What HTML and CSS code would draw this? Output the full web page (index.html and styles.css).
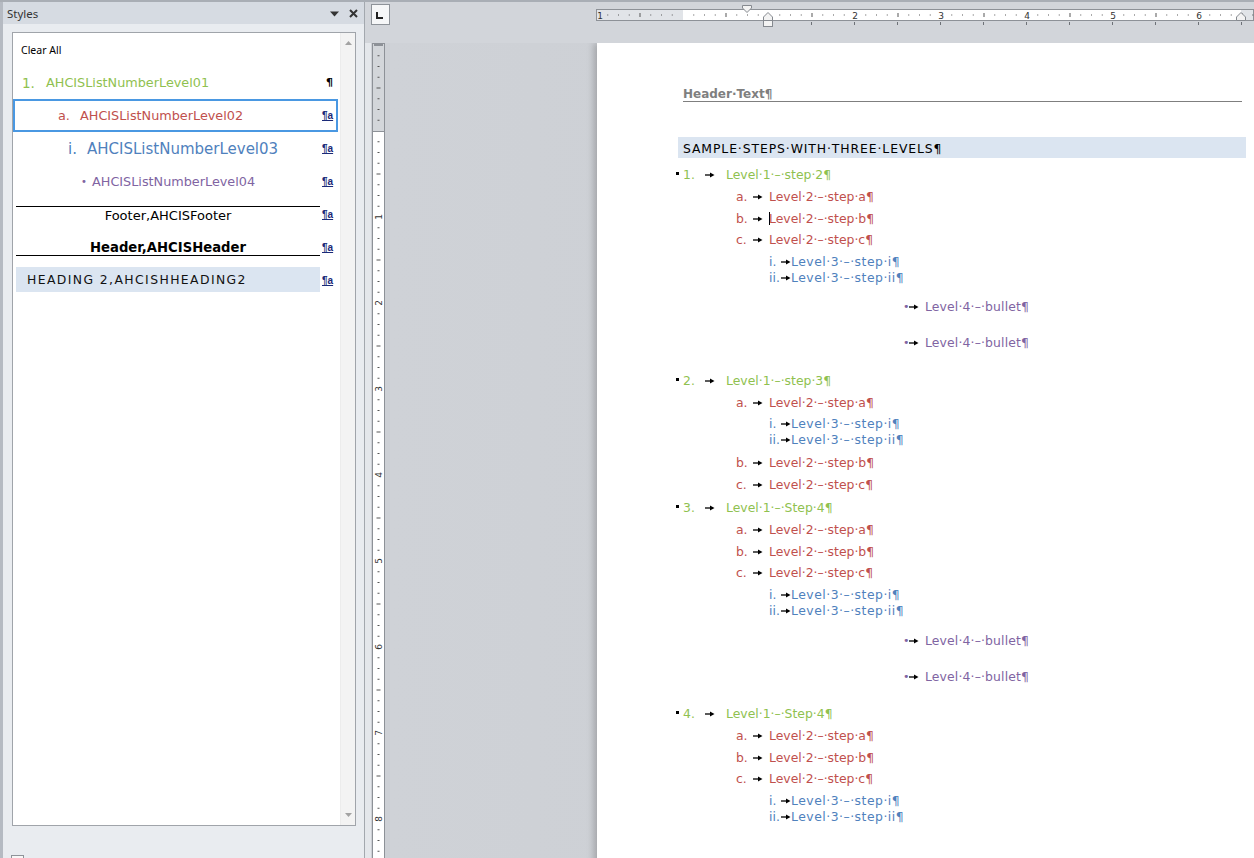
FILE: index.html
```html
<!DOCTYPE html>
<html>
<head>
<meta charset="utf-8">
<title>Styles</title>
<link rel="stylesheet" href="styles.css">
</head>
<body>
<div class="app">
  <aside class="pane">
    <div class="pane-title">
      <span class="pane-name">Styles</span>
      <span class="pane-btns">
        <svg class="ico-drop" width="9" height="6" viewBox="0 0 9 6"><path d="M0 0.5H9L4.5 5.5Z" fill="#333"/></svg>
        <svg class="ico-close" width="9" height="9" viewBox="0 0 9 9"><path d="M1 1L8 8M8 1L1 8" stroke="#333" stroke-width="2"/></svg>
      </span>
    </div>
    <div class="listbox">
      <div class="rows">
        <div class="srow"><div class="prev clear">Clear All</div><div class="sic"></div></div>
        <div class="srow"><div class="prev p1"><span class="n1">1.</span><span>AHCISListNumberLevel01</span></div><div class="sic para">¶</div></div>
        <div class="srow sel"><div class="prev p2"><span class="n2">a.</span><span>AHCISListNumberLevel02</span></div><div class="sic link">¶a</div></div>
        <div class="srow"><div class="prev p3"><span class="n3">i.</span><span>AHCISListNumberLevel03</span></div><div class="sic link">¶a</div></div>
        <div class="srow"><div class="prev p4"><span class="n4">•</span><span>AHCISListNumberLevel04</span></div><div class="sic link">¶a</div></div>
        <div class="srow"><div class="prev pfoot">Footer,AHCISFooter</div><div class="sic link">¶a</div></div>
        <div class="srow"><div class="prev phead">Header,AHCISHeader</div><div class="sic link">¶a</div></div>
        <div class="srow"><div class="prev ph2">HEADING 2,AHCISHHEADING2</div><div class="sic link">¶a</div></div>
      </div>
      <div class="vscroll">
        <svg width="7" height="4" viewBox="0 0 7 4"><path d="M0 4H7L3.5 0Z" fill="#a3a3a3"/></svg>
        <svg width="7" height="4" viewBox="0 0 7 4"><path d="M0 0H7L3.5 4Z" fill="#a3a3a3"/></svg>
      </div>
    </div>
    <div class="pane-foot"><span class="chk"></span></div>
  </aside>

  <section class="work">
    <div class="tabsel">
      <svg width="19" height="21" viewBox="0 0 19 21"><rect x="0.5" y="0.5" width="18" height="20" fill="#f6f7f8" stroke="#8e9399"/><path d="M6 8V14H12" fill="none" stroke="#222" stroke-width="2"/></svg>
    </div>
    <div class="hruler-cell">
      <svg class="hruler" width="658" height="24" viewBox="0 0 658 24">
        <defs>
          <pattern id="hticks" x="87" y="0" width="86" height="24" patternUnits="userSpaceOnUse">
            <rect x="10.25" y="10.5" width="1" height="1" fill="#555"/>
            <rect x="21" y="10.5" width="1" height="1" fill="#555"/>
            <rect x="31.75" y="10.5" width="1" height="1" fill="#555"/>
            <rect x="42.5" y="9" width="1" height="4" fill="#555"/>
            <rect x="53.25" y="10.5" width="1" height="1" fill="#555"/>
            <rect x="64" y="10.5" width="1" height="1" fill="#555"/>
            <rect x="74.75" y="10.5" width="1" height="1" fill="#555"/>
          </pattern>
          <pattern id="htabs" x="215" y="0" width="43" height="24" patternUnits="userSpaceOnUse">
            <rect x="0" y="18" width="1" height="3" fill="#6d7177"/>
          </pattern>
        </defs>
        <rect x="0.5" y="5.5" width="657" height="11" fill="#e1e4e8" stroke="#8d9197"/>
        <rect x="87" y="6" width="558" height="10" fill="#ffffff"/>
        <rect x="0" y="5" width="658" height="12" fill="url(#hticks)"/>
        <rect x="215" y="17" width="443" height="7" fill="url(#htabs)"/>
        <g class="rnum">
          <text x="4" y="14.5">1</text>
          <text x="259" y="14.5">2</text>
          <text x="345" y="14.5">3</text>
          <text x="431" y="14.5">4</text>
          <text x="517" y="14.5">5</text>
          <text x="603" y="14.5">6</text>
        </g>
        <path d="M146.5 1.5H155.5V4L151 8.5L146.5 4Z" fill="#f3f3f3" stroke="#85898f"/>
        <path d="M167.5 16.5V13L172 8.5L176.5 13V16.5Z" fill="#f3f3f3" stroke="#85898f"/>
        <rect x="167.5" y="16.5" width="9" height="6" fill="#f3f3f3" stroke="#85898f"/>
        <path d="M640.5 16.5V13L645 8.5L649.5 13V16.5Z" fill="#f3f3f3" stroke="#85898f"/>
      </svg>
    </div>
    <div class="vruler-cell">
      <svg class="vruler" width="13" height="815" viewBox="0 0 13 815">
        <defs>
          <pattern id="vticks" x="0" y="88" width="13" height="86" patternUnits="userSpaceOnUse">
            <rect x="5.5" y="10.25" width="2" height="1" fill="#555"/>
            <rect x="5.5" y="21" width="2" height="1" fill="#555"/>
            <rect x="5.5" y="31.75" width="2" height="1" fill="#555"/>
            <rect x="4.5" y="42.5" width="4" height="1" fill="#555"/>
            <rect x="5.5" y="53.25" width="2" height="1" fill="#555"/>
            <rect x="5.5" y="64" width="2" height="1" fill="#555"/>
            <rect x="5.5" y="74.75" width="2" height="1" fill="#555"/>
          </pattern>
        </defs>
        <rect x="0.5" y="0.5" width="12" height="830" fill="#ffffff" stroke="#8d9197"/>
        <rect x="1" y="1" width="11" height="87" fill="#d3d6da"/>
        <line x1="0" y1="88.5" x2="13" y2="88.5" stroke="#8d9197"/>
        <rect x="2" y="0" width="9" height="3" fill="#8d9197"/>
        <rect x="0" y="0" width="13" height="815" fill="url(#vticks)"/>
        <g class="rnum">
          <text transform="translate(6.5 174) rotate(-90)" y="3">1</text>
          <text transform="translate(6.5 260) rotate(-90)" y="3">2</text>
          <text transform="translate(6.5 346) rotate(-90)" y="3">3</text>
          <text transform="translate(6.5 432) rotate(-90)" y="3">4</text>
          <text transform="translate(6.5 518) rotate(-90)" y="3">5</text>
          <text transform="translate(6.5 604) rotate(-90)" y="3">6</text>
          <text transform="translate(6.5 690) rotate(-90)" y="3">7</text>
          <text transform="translate(6.5 776) rotate(-90)" y="3">8</text>
        </g>
      </svg>
    </div>
    <div class="docarea">
      <div class="page">
        <div class="hdr">Header·Text¶</div>
        <div class="h2band">SAMPLE·STEPS·WITH·THREE·LEVELS¶</div>
        <div class="list">
          <div class="ln l1"><i class="sq"></i><span class="num">1.</span><span class="tab"><svg class="arw" width="10" height="6" viewBox="0 0 10 6"><path d="M0 3H6" stroke="#000" stroke-width="1.3"/><path d="M5 0.5L9.5 3L5 5.5Z" fill="#000"/></svg></span><span class="txt">Level·1·–·step·2¶</span></div>
          <div class="ln l2"><span class="num">a.</span><span class="tab"><svg class="arw" width="10" height="6" viewBox="0 0 10 6"><path d="M0 3H6" stroke="#000" stroke-width="1.3"/><path d="M5 0.5L9.5 3L5 5.5Z" fill="#000"/></svg></span><span class="txt">Level·2·–·step·a¶</span></div>
          <div class="ln l2"><span class="num">b.</span><span class="tab"><svg class="arw" width="10" height="6" viewBox="0 0 10 6"><path d="M0 3H6" stroke="#000" stroke-width="1.3"/><path d="M5 0.5L9.5 3L5 5.5Z" fill="#000"/></svg></span><span class="txt"><span class="caret"></span>Level·2·–·step·b¶</span></div>
          <div class="ln l2"><span class="num">c.</span><span class="tab"><svg class="arw" width="10" height="6" viewBox="0 0 10 6"><path d="M0 3H6" stroke="#000" stroke-width="1.3"/><path d="M5 0.5L9.5 3L5 5.5Z" fill="#000"/></svg></span><span class="txt">Level·2·–·step·c¶</span></div>
          <div class="ln l3"><span class="num">i.</span><span class="tab"><svg class="arw" width="10" height="6" viewBox="0 0 10 6"><path d="M0 3H6" stroke="#000" stroke-width="1.3"/><path d="M5 0.5L9.5 3L5 5.5Z" fill="#000"/></svg></span><span class="txt">Level·3·–·step·i¶</span></div>
          <div class="ln l3 g13"><span class="num">ii.</span><span class="tab"><svg class="arw" width="10" height="6" viewBox="0 0 10 6"><path d="M0 3H6" stroke="#000" stroke-width="1.3"/><path d="M5 0.5L9.5 3L5 5.5Z" fill="#000"/></svg></span><span class="txt">Level·3·–·step·ii¶</span></div>
          <div class="ln l4"><span class="num">•</span><span class="tab"><svg class="arw" width="10" height="6" viewBox="0 0 10 6"><path d="M0 3H6" stroke="#000" stroke-width="1.3"/><path d="M5 0.5L9.5 3L5 5.5Z" fill="#000"/></svg></span><span class="txt">Level·4·–·bullet¶</span></div>
          <div class="ln l4 g21"><span class="num">•</span><span class="tab"><svg class="arw" width="10" height="6" viewBox="0 0 10 6"><path d="M0 3H6" stroke="#000" stroke-width="1.3"/><path d="M5 0.5L9.5 3L5 5.5Z" fill="#000"/></svg></span><span class="txt">Level·4·–·bullet¶</span></div>

          <div class="ln l1"><i class="sq"></i><span class="num">2.</span><span class="tab"><svg class="arw" width="10" height="6" viewBox="0 0 10 6"><path d="M0 3H6" stroke="#000" stroke-width="1.3"/><path d="M5 0.5L9.5 3L5 5.5Z" fill="#000"/></svg></span><span class="txt">Level·1·–·step·3¶</span></div>
          <div class="ln l2"><span class="num">a.</span><span class="tab"><svg class="arw" width="10" height="6" viewBox="0 0 10 6"><path d="M0 3H6" stroke="#000" stroke-width="1.3"/><path d="M5 0.5L9.5 3L5 5.5Z" fill="#000"/></svg></span><span class="txt">Level·2·–·step·a¶</span></div>
          <div class="ln l3"><span class="num">i.</span><span class="tab"><svg class="arw" width="10" height="6" viewBox="0 0 10 6"><path d="M0 3H6" stroke="#000" stroke-width="1.3"/><path d="M5 0.5L9.5 3L5 5.5Z" fill="#000"/></svg></span><span class="txt">Level·3·–·step·i¶</span></div>
          <div class="ln l3 g7"><span class="num">ii.</span><span class="tab"><svg class="arw" width="10" height="6" viewBox="0 0 10 6"><path d="M0 3H6" stroke="#000" stroke-width="1.3"/><path d="M5 0.5L9.5 3L5 5.5Z" fill="#000"/></svg></span><span class="txt">Level·3·–·step·ii¶</span></div>
          <div class="ln l2"><span class="num">b.</span><span class="tab"><svg class="arw" width="10" height="6" viewBox="0 0 10 6"><path d="M0 3H6" stroke="#000" stroke-width="1.3"/><path d="M5 0.5L9.5 3L5 5.5Z" fill="#000"/></svg></span><span class="txt">Level·2·–·step·b¶</span></div>
          <div class="ln l2 g7"><span class="num">c.</span><span class="tab"><svg class="arw" width="10" height="6" viewBox="0 0 10 6"><path d="M0 3H6" stroke="#000" stroke-width="1.3"/><path d="M5 0.5L9.5 3L5 5.5Z" fill="#000"/></svg></span><span class="txt">Level·2·–·step·c¶</span></div>

          <div class="ln l1"><i class="sq"></i><span class="num">3.</span><span class="tab"><svg class="arw" width="10" height="6" viewBox="0 0 10 6"><path d="M0 3H6" stroke="#000" stroke-width="1.3"/><path d="M5 0.5L9.5 3L5 5.5Z" fill="#000"/></svg></span><span class="txt">Level·1·–·Step·4¶</span></div>
          <div class="ln l2"><span class="num">a.</span><span class="tab"><svg class="arw" width="10" height="6" viewBox="0 0 10 6"><path d="M0 3H6" stroke="#000" stroke-width="1.3"/><path d="M5 0.5L9.5 3L5 5.5Z" fill="#000"/></svg></span><span class="txt">Level·2·–·step·a¶</span></div>
          <div class="ln l2"><span class="num">b.</span><span class="tab"><svg class="arw" width="10" height="6" viewBox="0 0 10 6"><path d="M0 3H6" stroke="#000" stroke-width="1.3"/><path d="M5 0.5L9.5 3L5 5.5Z" fill="#000"/></svg></span><span class="txt">Level·2·–·step·b¶</span></div>
          <div class="ln l2"><span class="num">c.</span><span class="tab"><svg class="arw" width="10" height="6" viewBox="0 0 10 6"><path d="M0 3H6" stroke="#000" stroke-width="1.3"/><path d="M5 0.5L9.5 3L5 5.5Z" fill="#000"/></svg></span><span class="txt">Level·2·–·step·c¶</span></div>
          <div class="ln l3"><span class="num">i.</span><span class="tab"><svg class="arw" width="10" height="6" viewBox="0 0 10 6"><path d="M0 3H6" stroke="#000" stroke-width="1.3"/><path d="M5 0.5L9.5 3L5 5.5Z" fill="#000"/></svg></span><span class="txt">Level·3·–·step·i¶</span></div>
          <div class="ln l3 g14"><span class="num">ii.</span><span class="tab"><svg class="arw" width="10" height="6" viewBox="0 0 10 6"><path d="M0 3H6" stroke="#000" stroke-width="1.3"/><path d="M5 0.5L9.5 3L5 5.5Z" fill="#000"/></svg></span><span class="txt">Level·3·–·step·ii¶</span></div>
          <div class="ln l4"><span class="num">•</span><span class="tab"><svg class="arw" width="10" height="6" viewBox="0 0 10 6"><path d="M0 3H6" stroke="#000" stroke-width="1.3"/><path d="M5 0.5L9.5 3L5 5.5Z" fill="#000"/></svg></span><span class="txt">Level·4·–·bullet¶</span></div>
          <div class="ln l4 g21"><span class="num">•</span><span class="tab"><svg class="arw" width="10" height="6" viewBox="0 0 10 6"><path d="M0 3H6" stroke="#000" stroke-width="1.3"/><path d="M5 0.5L9.5 3L5 5.5Z" fill="#000"/></svg></span><span class="txt">Level·4·–·bullet¶</span></div>

          <div class="ln l1"><i class="sq"></i><span class="num">4.</span><span class="tab"><svg class="arw" width="10" height="6" viewBox="0 0 10 6"><path d="M0 3H6" stroke="#000" stroke-width="1.3"/><path d="M5 0.5L9.5 3L5 5.5Z" fill="#000"/></svg></span><span class="txt">Level·1·–·Step·4¶</span></div>
          <div class="ln l2"><span class="num">a.</span><span class="tab"><svg class="arw" width="10" height="6" viewBox="0 0 10 6"><path d="M0 3H6" stroke="#000" stroke-width="1.3"/><path d="M5 0.5L9.5 3L5 5.5Z" fill="#000"/></svg></span><span class="txt">Level·2·–·step·a¶</span></div>
          <div class="ln l2"><span class="num">b.</span><span class="tab"><svg class="arw" width="10" height="6" viewBox="0 0 10 6"><path d="M0 3H6" stroke="#000" stroke-width="1.3"/><path d="M5 0.5L9.5 3L5 5.5Z" fill="#000"/></svg></span><span class="txt">Level·2·–·step·b¶</span></div>
          <div class="ln l2"><span class="num">c.</span><span class="tab"><svg class="arw" width="10" height="6" viewBox="0 0 10 6"><path d="M0 3H6" stroke="#000" stroke-width="1.3"/><path d="M5 0.5L9.5 3L5 5.5Z" fill="#000"/></svg></span><span class="txt">Level·2·–·step·c¶</span></div>
          <div class="ln l3"><span class="num">i.</span><span class="tab"><svg class="arw" width="10" height="6" viewBox="0 0 10 6"><path d="M0 3H6" stroke="#000" stroke-width="1.3"/><path d="M5 0.5L9.5 3L5 5.5Z" fill="#000"/></svg></span><span class="txt">Level·3·–·step·i¶</span></div>
          <div class="ln l3"><span class="num">ii.</span><span class="tab"><svg class="arw" width="10" height="6" viewBox="0 0 10 6"><path d="M0 3H6" stroke="#000" stroke-width="1.3"/><path d="M5 0.5L9.5 3L5 5.5Z" fill="#000"/></svg></span><span class="txt">Level·3·–·step·ii¶</span></div>
        </div>
      </div>
    </div>
  </section>
</div>
</body>
</html>
```

FILE: styles.css
```css
* { box-sizing: border-box; }
html, body { margin: 0; padding: 0; }
body {
  width: 1254px;
  height: 858px;
  overflow: hidden;
  font-family: "DejaVu Sans", Verdana, sans-serif;
  background: #cdd0d5;
}
.app {
  display: flex;
  height: 858px;
  border-top: 2px solid #a9aeb5;
}

/* ---------- Styles pane ---------- */
.pane {
  width: 365px;
  flex: none;
  display: flex;
  flex-direction: column;
  background: #e9ecf0;
  border-left: 3px solid #b5bac2;
  border-right: 1px solid #a3a8ae;
}
.pane-title {
  height: 22px;
  flex: none;
  display: flex;
  align-items: center;
  justify-content: space-between;
  background: #d6dbe2;
  padding: 0 6px 0 4px;
}
.pane-name {
  font-family: "Noto Sans", "Open Sans", sans-serif;
  font-size: 11.5px;
  color: #333;
}
.pane-btns { display: flex; align-items: center; gap: 10px; }
.ico-drop { margin-top: 1px; }

.listbox {
  margin: 8px 0 0 9px;
  width: 344px;
  height: 794px;
  flex: none;
  background: #fff;
  border: 1px solid #a0a4aa;
  display: flex;
  gap: 2px;
}
.rows { width: 325px; display: flex; flex-direction: column; }
.srow {
  height: 33px;
  display: flex;
  border: 2px solid transparent;
}
.srow.sel { border-color: #4a98e2; }
.prev {
  margin-left: 1px;
  width: 304px;
  display: flex;
  align-items: center;
  font-size: 12.8px;
  white-space: nowrap;
}
.sic {
  width: 16px;
  padding-left: 2px;
  display: flex;
  align-items: center;
  font-family: "Liberation Sans", Arial, sans-serif;
  font-weight: bold;
  font-size: 10px;
}
.sic.para {
  padding-left: 6px;
  font-family: "DejaVu Sans", sans-serif;
  font-size: 11px;
  color: #000000;
}
.sic.link { color: #1b2a78; text-decoration: underline; }

.clear {
  padding-left: 5px;
  font-family: "Noto Sans", "Open Sans", sans-serif;
  font-size: 10.5px;
  color: #000;
}
.p1 { color: #8fc14f; }
.n1 { margin-left: 6px; width: 24px; font-size: 13.5px; }
.p2 { color: #c0504d; }
.n2 { margin-left: 42px; width: 22px; }
.p3 { color: #4f81bd; font-size: 15px; }
.n3 { margin-left: 52px; width: 19px; }
.p4 { color: #8064a2; font-size: 12.8px; }
.n4 { margin-left: 65px; width: 11px; font-size: 10px; }
.pfoot {
  margin-top: 6px;
  height: 18px;
  align-self: flex-start;
  justify-content: center;
  border-top: 1px solid #000;
  font-size: 13px;
  color: #000;
}
.phead {
  margin-top: 6px;
  height: 17px;
  align-self: flex-start;
  justify-content: center;
  border-bottom: 1px solid #000;
  font-weight: bold;
  font-size: 13.2px;
  color: #000;
}
.ph2 {
  margin-top: 1px;
  height: 25px;
  align-self: flex-start;
  padding-left: 11px;
  background: #dbe5f1;
  font-size: 12.4px;
  letter-spacing: 1.4px;
  color: #111;
}

.vscroll {
  width: 15px;
  background: #f3f3f3;
  border-left: 1px solid #ececec;
  display: flex;
  flex-direction: column;
  justify-content: space-between;
  align-items: center;
  padding: 8px 0 8px;
}

.pane-foot { padding: 29px 0 0 8px; }
.chk {
  display: block;
  width: 13px;
  height: 13px;
  border: 1px solid #8e9399;
  background: #f7f7f7;
}

/* ---------- Work area ---------- */
.work {
  flex: 1;
  display: grid;
  grid-template-columns: 25px 1fr;
  grid-template-rows: 41px 1fr;
  background: #cdd0d5;
  min-width: 0;
}
.tabsel { padding: 2px 0 0 6px; background: #d2d5da; }
.tabsel svg { display: block; }
.hruler-cell { padding: 2px 0 0 206px; background: #d2d5da; overflow: hidden; }
.hruler { display: block; }
.rnum {
  font-family: "DejaVu Sans", sans-serif;
  font-size: 9px;
  fill: #333;
  text-anchor: middle;
}
.vruler-cell {
  padding-left: 7px;
  background: linear-gradient(to right, #e4e7eb 0, #e4e7eb 6px, #cdd0d5 6px);
  overflow: hidden;
}
.vruler { display: block; }

.docarea {
  overflow: hidden;
  padding-left: 207px;
  background: linear-gradient(to right, #cfd2d7, #c9ccd1);
}
.page {
  width: 760px;
  height: 900px;
  background: #fff;
  padding: 44px 0 0 86px;
  box-shadow: -3px 0 7px rgba(0, 0, 0, 0.22);
}
.hdr {
  width: 559px;
  height: 15px;
  line-height: 14px;
  border-bottom: 1px solid #7f7f7f;
  font-weight: bold;
  font-size: 12px;
  color: #7f7f7f;
}
.h2band {
  margin: 35px 0 0 -5px;
  width: 568px;
  height: 21px;
  padding: 4px 0 0 5px;
  line-height: 16px;
  background: #dbe5f1;
  font-size: 12.4px;
  letter-spacing: 0.9px;
  color: #000;
}
.list {
  display: flex;
  flex-direction: column;
  padding-top: 9px;
}
.ln {
  display: flex;
  align-items: center;
  height: 16px;
  line-height: 16px;
  font-size: 12.4px;
  white-space: nowrap;
}
.tab { display: flex; align-items: center; }
.arw { display: block; }
.sq {
  width: 3px;
  height: 3px;
  margin: 0 4px 3px -7px;
  background: #000;
}
.l1 { color: #8fc14f; margin-bottom: 6px; }
.l1 .num { width: 22px; }
.l1 .tab { width: 21px; }
.l2 { color: #c0504d; margin-bottom: 5.6px; padding-left: 53px; }
.l2 .num { width: 17px; }
.l2 .tab { width: 16px; }
.l3 { color: #4f81bd; padding-left: 86px; }
.l3 .num { width: 12px; }
.l3 .tab { width: 10px; }
.l3 .txt { letter-spacing: 0.5px; }
.l4 { color: #8064a2; padding-left: 220px; margin-bottom: 20px; }
.l4 .num { width: 5px; font-size: 11px; }
.l4 .tab { width: 17px; padding-left: 1px; }
.l4 .txt { letter-spacing: 0.15px; }
.g7 { margin-bottom: 7px; }
.g13 { margin-bottom: 13.5px; }
.g14 { margin-bottom: 14px; }
.g21 { margin-bottom: 21.5px; }
.caret {
  display: inline-block;
  width: 0;
  height: 13px;
  margin-right: -1px;
  border-left: 1.5px solid #000;
  vertical-align: -2px;
}
```
